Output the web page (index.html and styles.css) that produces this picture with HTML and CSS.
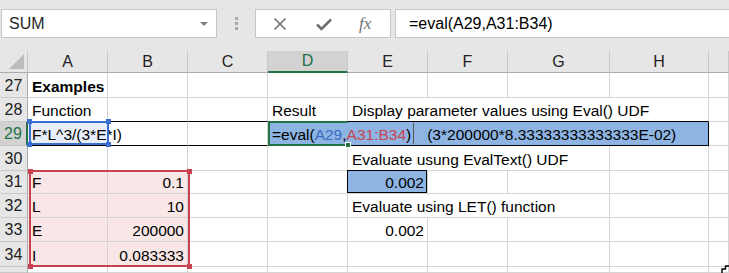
FILE: index.html
```html
<!DOCTYPE html>
<html lang="en">
<head>
    <meta charset="UTF-8">
    <title>Eval UDF examples</title>
    <link rel="stylesheet" href="styles.css">
</head>
<body>
    <!-- name box + formula bar -->
    <div class="toolbar">
        <div class="namebox"><span>SUM</span><span class="caret"></span></div>
        <div class="grip"><i></i><i></i><i></i></div>
        <div class="fxbtns">
            <svg class="ico" width="14" height="14" viewBox="0 0 14 14"><path d="M1.5 1.5 L12.5 12.5 M12.5 1.5 L1.5 12.5" stroke="#6f6f6f" stroke-width="1.6" fill="none"/></svg>
            <svg class="ico" width="18" height="14" viewBox="0 0 18 14"><path d="M2 7.5 L6.5 12 L16 2.5" stroke="#6f6f6f" stroke-width="2.6" fill="none"/></svg>
            <span class="fx">fx</span>
        </div>
        <div class="formula">=eval(A29,A31:B34)</div>
    </div>

    <!-- sheet grid -->
    <div class="sheet">
        <div class="c hd corner"><span class="tri"></span></div>
        <div class="c hd">A</div>
        <div class="c hd">B</div>
        <div class="c hd">C</div>
        <div class="c hd on">D</div>
        <div class="c hd">E</div>
        <div class="c hd">F</div>
        <div class="c hd">G</div>
        <div class="c hd">H</div>
        <div class="c hd"></div>

        <div class="c rh">27</div>
        <div class="c"><b>Examples</b></div>
        <div class="c"></div><div class="c"></div><div class="c"></div><div class="c"></div>
        <div class="c"></div><div class="c"></div><div class="c"></div><div class="c"></div>

        <div class="c rh">28</div>
        <div class="c line">Function</div>
        <div class="c line"></div>
        <div class="c line"></div>
        <div class="c line">Result</div>
        <div class="c line span4">Display parameter values using Eval() UDF</div>
        <div class="c"></div>

        <div class="c rh on">29</div>
        <div class="c line picked">F*L^3/(3*E*I)<i class="h tl"></i><i class="h tr"></i><i class="h bl"></i><i class="h br"></i></div>
        <div class="c line"></div>
        <div class="c line"></div>
        <div class="c span5 editing">
            <span>=eval(<span class="ref1">A29</span>,<span class="ref2">A31:B34</span>)</span><span class="caretline"></span>
            <span class="preview">(3*200000*8.33333333333333E-02)</span>
            <i class="fill"></i>
        </div>
        <div class="c"></div>

        <div class="c rh">30</div>
        <div class="c"></div><div class="c"></div><div class="c"></div><div class="c"></div>
        <div class="c span3">Evaluate usung EvalText() UDF</div>
        <div class="c"></div><div class="c"></div>

        <div class="c rh">31</div>
        <div class="c pink">F</div>
        <div class="c pink num">0.1</div>
        <div class="c"></div><div class="c"></div>
        <div class="c num boxed">0.002</div>
        <div class="c"></div><div class="c"></div><div class="c"></div><div class="c"></div>

        <div class="c rh">32</div>
        <div class="c pink">L</div>
        <div class="c pink num">10</div>
        <div class="c"></div><div class="c"></div>
        <div class="c span3">Evaluate using LET() function</div>
        <div class="c"></div><div class="c"></div>

        <div class="c rh">33</div>
        <div class="c pink">E</div>
        <div class="c pink num">200000</div>
        <div class="c"></div><div class="c"></div>
        <div class="c num">0.002</div>
        <div class="c"></div><div class="c"></div><div class="c"></div><div class="c"></div>

        <div class="c rh">34</div>
        <div class="c pink">I</div>
        <div class="c pink num">0.083333</div>
        <div class="c"></div><div class="c"></div><div class="c"></div>
        <div class="c"></div><div class="c"></div><div class="c"></div><div class="c"></div>

        <div class="c rh"></div>
        <div class="c"></div><div class="c"></div><div class="c"></div><div class="c"></div><div class="c"></div>
        <div class="c"></div><div class="c"></div><div class="c"></div><div class="c"></div>

        <!-- reference range highlight -->
        <div class="range"><i class="h tl"></i><i class="h tr"></i><i class="h bl"></i><i class="h br"></i></div>
        <svg class="mouse" width="8" height="8" viewBox="0 0 8 8"><path d="M1 8 V4 H4.5 V1 H8" stroke="#000" stroke-width="1.4" fill="none"/></svg>
    </div>
</body>
</html>
```

FILE: styles.css
```css
body {
    margin: 0;
    width: 729px;
    height: 273px;
    overflow: hidden;
    background: #fff;
    font-family: "Liberation Sans", Arial, sans-serif;
    font-size: 15.5px;
    color: #000;
}

/* ---- formula bar ---- */
.toolbar {
    display: flex;
    align-items: flex-start;
    height: 51px;
    padding-top: 9px;
    box-sizing: border-box;
    background: #e6e6e6;
}

.namebox {
    margin-left: 1px;
    width: 216px;
    height: 29px;
    box-sizing: border-box;
    background: #fff;
    border: 1px solid #c6c6c6;
    display: flex;
    align-items: center;
    justify-content: space-between;
    padding: 0 8px 0 7px;
    font-size: 16px;
    color: #262626;
}

.caret {
    width: 0;
    height: 0;
    border-left: 4px solid transparent;
    border-right: 4px solid transparent;
    border-top: 4px solid #808080;
}

.grip {
    width: 38px;
    display: flex;
    flex-direction: column;
    align-items: center;
    gap: 2px;
    padding-top: 8px;
}

.grip i {
    width: 3px;
    height: 3px;
    background: #a8a8a8;
}

.fxbtns {
    width: 136px;
    height: 29px;
    box-sizing: border-box;
    background: #fff;
    border: 1px solid #c6c6c6;
    display: flex;
    align-items: center;
    padding-left: 17px;
    gap: 28px;
}

.fx {
    font-family: "Liberation Serif", serif;
    font-style: italic;
    font-size: 17px;
    color: #6f6f6f;
    margin-left: -2px;
}

.formula {
    margin-left: 4px;
    flex: 1;
    height: 29px;
    box-sizing: border-box;
    background: #fff;
    border: 1px solid #c6c6c6;
    border-right: none;
    padding-left: 13px;
    display: flex;
    align-items: center;
    font-size: 16px;
}

/* ---- grid ---- */
.sheet {
    position: relative;
    display: grid;
    grid-template-columns: 28px 80px 80px 80px 80px 80px 80px 102px 99px 20px;
    grid-template-rows: 22px 25px 24px 24px 25px 23px 24px 24px 25px 6px;
}

.c {
    position: relative;
    box-sizing: border-box;
    border-right: 1px solid #d4d4d4;
    border-bottom: 1px solid #d4d4d4;
    display: flex;
    align-items: flex-end;
    padding: 0 3px 1px 4px;
    white-space: nowrap;
    overflow: visible;
}

.hd {
    background: #e6e6e6;
    border-right-color: #c8c8c8;
    border-bottom-color: #ababab;
    justify-content: center;
    align-items: center;
    padding: 0;
    font-size: 16px;
    color: #222;
}

.rh {
    background: #e6e6e6;
    border-right-color: #ababab;
    border-bottom-color: #c8c8c8;
    justify-content: center;
    padding: 0 0 2px;
    font-size: 16px;
    color: #222;
}

.hd.on {
    background: #d2d2d2;
    color: #217346;
    border-bottom: 2px solid #217346;
}

.rh.on {
    background: #d2d2d2;
    color: #217346;
    border-right: 2px solid #217346;
}

.corner {
    justify-content: flex-end;
    align-items: flex-end;
}

.tri {
    width: 0;
    height: 0;
    border-left: 15px solid transparent;
    border-bottom: 15px solid #bcbcbc;
    margin: 0 3px 3px 0;
}

.num {
    justify-content: flex-end;
}

.line {
    border-bottom-color: #000;
}

.span3 { grid-column: span 3; }
.span4 { grid-column: span 4; }
.span5 { grid-column: span 5; }

.h {
    position: absolute;
    width: 5px;
    height: 5px;
    z-index: 1;
}

/* A29: the cell being referenced */
.picked {
    background: #e8eef9;
    z-index: 2;
    border-right: none;
}

.picked::after {
    content: "";
    position: absolute;
    top: -1px;
    left: 1px;
    right: -1px;
    bottom: 0;
    border: 2px solid #3b6fcf;
}

.picked .h { background: #3b6fcf; }
.picked .tl { left: -1px; top: -3px; }
.picked .tr { right: -3px; top: -3px; }
.picked .bl { left: -1px; bottom: -2px; }
.picked .br { right: -3px; bottom: -2px; }

/* D29 in edit mode */
.editing {
    background: #8db4e2;
    border-right-color: #000;
    border-bottom-color: #000;
}

.editing::after {
    content: "";
    position: absolute;
    top: -1px;
    left: 0;
    width: 78px;
    bottom: -1px;
    border: 2px solid #217346;
    border-right: none;
}

.editing .fill {
    position: absolute;
    left: 77px;
    bottom: -3px;
    width: 4px;
    height: 4px;
    background: #217346;
    border: 1px solid #fff;
    z-index: 1;
}

.ref1 { color: #3c6bc5; }
.ref2 { color: #c7434f; }

.caretline {
    width: 1px;
    height: 21px;
    background: #555;
    margin-left: 2px;
    align-self: center;
}

.preview {
    margin-left: 13px;
}

.boxed {
    background: #8db4e2;
}

.boxed::after {
    content: "";
    position: absolute;
    top: -1px;
    left: -1px;
    right: 0;
    bottom: 0;
    border: 1px solid #000;
}

.pink {
    background: #f9e7e7;
}

.range {
    position: absolute;
    left: 29px;
    top: 119px;
    width: 161px;
    height: 97px;
    box-sizing: border-box;
    border: 2px solid #c7434f;
}

.range .h { background: #c7434f; }
.range .tl { left: -3px; top: -3px; }
.range .tr { right: -4px; top: -3px; }
.range .bl { left: -3px; bottom: -4px; }
.range .br { right: -4px; bottom: -4px; }

.mouse {
    position: absolute;
    right: 0;
    bottom: 0;
}
```
